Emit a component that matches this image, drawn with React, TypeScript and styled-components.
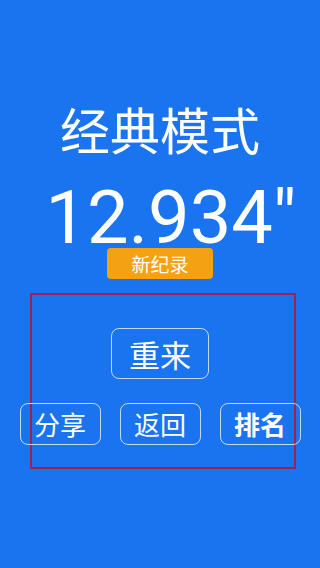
import React, { FC } from "react";
import styled, { createGlobalStyle } from "styled-components";

const GlobalStyle = createGlobalStyle`
  html, body {
    margin: 0;
    padding: 0;
    background: #1a73ef;
  }

  body {
    font-family: "Noto Sans CJK SC", "Noto Sans", sans-serif;
    color: #ffffff;
  }
`;

const Screen = styled.div`
  width: 320px;
  min-height: 568px;
  background: #1a73ef;
  display: flex;
  flex-direction: column;
  align-items: center;
  overflow: hidden;
`;

const Title = styled.h1`
  margin: 103px 0 0 0;
  font-size: 50px;
  line-height: 50px;
  font-weight: 400;
  letter-spacing: 0;
`;

const Score = styled.div`
  margin: 36px 0 0 22px;
  font-family: Roboto, "Noto Sans", sans-serif;
  font-size: 74px;
  line-height: 58px;
  font-weight: 400;
`;

const RecordBadge = styled.div`
  width: 106px;
  height: 31px;
  margin-top: 1px;
  background: #f5a212;
  border-radius: 4px;
  font-size: 19px;
  line-height: 31px;
  text-align: center;
`;

const Panel = styled.section`
  box-sizing: border-box;
  width: 266px;
  height: 176px;
  margin: 14px 0 0 6px;
  border: 2px solid #a0234e;
  display: flex;
  flex-direction: column;
`;

const PanelInner = styled.div`
  width: 282px;
  margin: 33px 0 0 -13px;
  display: flex;
  flex-direction: column;
  align-items: center;
  gap: 24px;
`;

const ButtonRow = styled.div`
  width: 281px;
  display: flex;
  justify-content: space-between;
`;

const OutlineButton = styled.button<{ $size: "big" | "small"; $bold?: boolean }>`
  box-sizing: border-box;
  width: ${(p) => (p.$size === "big" ? "98px" : "81px")};
  height: ${(p) => (p.$size === "big" ? "51px" : "42px")};
  padding: 0;
  background: transparent;
  border: 1px solid rgba(255, 255, 255, 0.72);
  border-radius: 8px;
  color: #ffffff;
  font-family: "Noto Sans CJK SC", "Noto Sans", sans-serif;
  font-size: ${(p) => (p.$size === "big" ? "31px" : "26px")};
  font-weight: ${(p) => (p.$bold ? 700 : 400)};
  line-height: 1;
  display: flex;
  align-items: center;
  justify-content: center;
  cursor: pointer;
`;

const App: FC = () => {
  return (
    <>
      <GlobalStyle />
      <Screen>
        <Title>经典模式</Title>
        <Score>12.934"</Score>
        <RecordBadge>新纪录</RecordBadge>
        <Panel>
          <PanelInner>
            <OutlineButton $size="big">重来</OutlineButton>
            <ButtonRow>
              <OutlineButton $size="small">分享</OutlineButton>
              <OutlineButton $size="small">返回</OutlineButton>
              <OutlineButton $size="small" $bold>
                排名
              </OutlineButton>
            </ButtonRow>
          </PanelInner>
        </Panel>
      </Screen>
    </>
  );
};

export default App;
